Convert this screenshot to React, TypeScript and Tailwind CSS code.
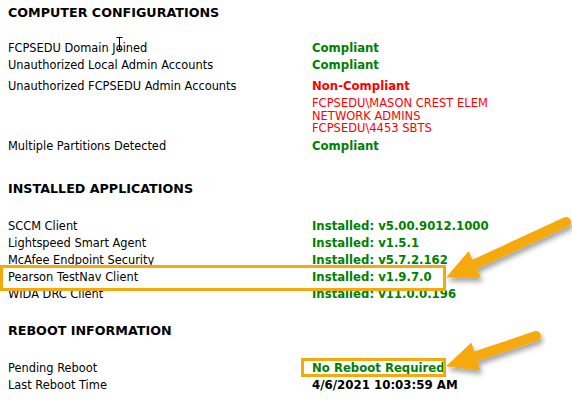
import React from "react";

const G = "text-[#008000] font-bold text-[11.7px]";

function Row({ label, children, cls = "" }: { label: string; children: React.ReactNode; cls?: string }) {
  return (
    <div className={`flex h-[17px] leading-[17px] ${cls}`}>
      <div className="w-[304px] shrink-0 text-[11.4px]">{label}</div>
      <div>{children}</div>
    </div>
  );
}

function H({ children, cls = "" }: { children: React.ReactNode; cls?: string }) {
  return <div className={`h-[17px] leading-[17px] text-[12.7px] font-bold ${cls}`}>{children}</div>;
}

export default function App() {
  return (
    <div className="relative w-[572px] h-[405px] bg-white overflow-hidden text-black text-[12px]" style={{ fontFamily: '"DejaVu Sans", Verdana, sans-serif' }}>
      <div className="pt-[4px] pl-[8px]">
        <H>COMPUTER CONFIGURATIONS</H>
        <Row label="FCPSEDU Domain Joined" cls="mt-[19px]"><span className={G}>Compliant</span></Row>
        <Row label="Unauthorized Local Admin Accounts"><span className={G}>Compliant</span></Row>
        <div className="flex mt-[4px]">
          <div className="w-[304px] shrink-0 h-[17px] leading-[17px] text-[11.4px]">Unauthorized FCPSEDU Admin Accounts</div>
          <div>
            <div className="h-[17px] leading-[17px] text-[#ff0000] font-bold text-[11.7px]">Non-Compliant</div>
            <div className="mt-[2px] text-[#ff0000] text-[11.5px] leading-[12.5px]">
              <div>FCPSEDU\MASON CREST ELEM</div>
              <div>NETWORK ADMINS</div>
              <div>FCPSEDU\4453 SBTS</div>
            </div>
          </div>
        </div>
        <Row label="Multiple Partitions Detected" cls="mt-[3px]"><span className={G}>Compliant</span></Row>

        <H cls="mt-[25px]">INSTALLED APPLICATIONS</H>
        <Row label="SCCM Client" cls="mt-[21px]"><span className={G}>Installed: v5.00.9012.1000</span></Row>
        <Row label="Lightspeed Smart Agent"><span className={G}>Installed: v1.5.1</span></Row>
        <Row label="McAfee Endpoint Security"><span className={G}>Installed: v5.7.2.162</span></Row>
        <Row label="Pearson TestNav Client"><span className={G}>Installed: v1.9.7.0</span></Row>
        <Row label="WIDA DRC Client"><span className={G}>Installed: v11.0.0.196</span></Row>

        <H cls="mt-[19px]">REBOOT INFORMATION</H>
        <Row label="Pending Reboot" cls="mt-[21px]"><span className={G}>No Reboot Required</span></Row>
        <Row label="Last Reboot Time"><span className="font-bold text-[11.8px]">4/6/2021 10:03:59 AM</span></Row>
      </div>

      {/* annotation boxes */}
      <div className="absolute left-[0px] top-[265px] w-[446px] h-[26px] border-[3px] border-[#f6a90b]" />
      <div className="absolute left-[301px] top-[358px] w-[145px] h-[19px] border-[3px] border-[#f6a90b]" />

      {/* arrows + cursor */}
      <svg className="absolute left-0 top-0" width="572" height="405" viewBox="0 0 572 405">
        <defs>
          <filter id="sh" x="-20%" y="-20%" width="140%" height="160%">
            <feDropShadow dx="2" dy="4" stdDeviation="2.5" floodColor="#000" floodOpacity="0.35" />
          </filter>
        </defs>
        <g filter="url(#sh)" fill="#f6a90b" stroke="#f6a90b">
          <line x1="566" y1="222" x2="474" y2="264.5" strokeWidth="10" strokeLinecap="round" />
          <polygon points="447,277 468.5,251.8 480.1,277.2" strokeWidth="1" strokeLinejoin="round" />
          <line x1="536" y1="336" x2="475" y2="356.6" strokeWidth="10" strokeLinecap="round" />
          <polygon points="447,366 471.1,343.3 479.9,369.9" strokeWidth="1" strokeLinejoin="round" />
        </g>
        <g stroke="#000" strokeWidth="1" fill="none">
          <line x1="119.5" y1="37" x2="119.5" y2="50" />
          <line x1="116.5" y1="37.5" x2="122.5" y2="37.5" />
          <line x1="116.5" y1="49.5" x2="122.5" y2="49.5" />
        </g>
      </svg>
    </div>
  );
}
